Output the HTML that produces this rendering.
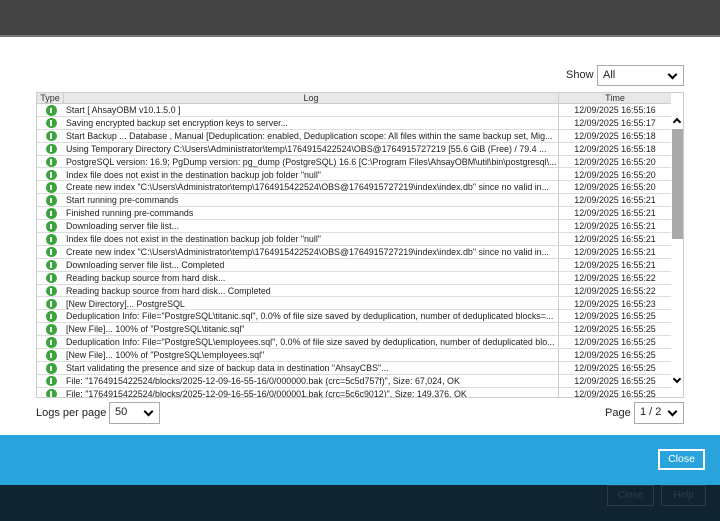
<!DOCTYPE html>
<html><head><style>
*{margin:0;padding:0;box-sizing:border-box}
body{width:720px;height:521px;position:relative;background:#fff;font-family:"Liberation Sans",sans-serif;overflow:hidden}
.top{position:absolute;left:0;top:0;width:720px;height:35px;background:#444}
.top2{position:absolute;left:0;top:35px;width:720px;height:2px;background:#777}
.blue{position:absolute;left:0;top:435px;width:720px;height:50px;background:#29a4dc}
.dark{position:absolute;left:0;top:485px;width:720px;height:36px;background:#0f2331}
.lbl{position:absolute;font-size:11px;color:#222}
.sel{position:absolute;border:1px solid #aaa;background:#fff;font-size:11px;color:#222;padding:3px 5px}
.chev{position:absolute;right:7px;top:5px;width:7px;height:7px;border-right:2.5px solid #000;border-bottom:2.5px solid #000;transform:rotate(45deg)}
.tbl{position:absolute;left:36px;top:92px;width:648px;height:306px;border:1px solid #ccc;overflow:hidden}
.hdr{position:absolute;left:0;top:0;width:634px;height:11px;background:#e8e8e8;border-bottom:1px solid #ccc;font-size:9px;color:#333}
.hdr span{position:absolute;top:0;text-align:center}
.row{position:absolute;left:0;width:634px;height:12.9px;border-bottom:1px solid #ddd;font-size:8.9px;color:#222;line-height:12px;white-space:nowrap}
.ic{position:absolute;left:9px;top:1px;width:10.5px;height:10.5px;border-radius:50%;background:#3aa53a}
.ic:after{content:"";position:absolute;left:4.2px;top:2.5px;width:2px;height:5.5px;background:#fff}
.lg{position:absolute;left:29px;width:490px;overflow:hidden}
.tm{position:absolute;left:521px;width:113px;text-align:center;border-left:1px solid #ccc}
.sb{position:absolute;left:634px;top:0;width:14px;height:306px;background:#fff}
.thumb{position:absolute;left:635px;top:36px;width:12px;height:110px;background:#aaa}
.btn{position:absolute;font-size:10px;text-align:center}
</style></head><body>
<div class="top"></div><div class="top2"></div>
<div class="lbl" style="left:566px;top:69px">Show</div>
<div class="sel" style="left:597px;top:65px;width:87px;height:21px">All<div class="chev"></div></div>
<div class="tbl">
<div class="hdr"><span style="left:0;width:26px">Type</span><span style="left:26px;width:495px;border-left:1px solid #ccc">Log</span><span style="left:521px;width:113px;border-left:1px solid #ccc">Time</span></div>
<div id="rows"></div>
<div class="sb"></div>
<div class="thumb"></div>
<div style="position:absolute;left:637px;top:26px;width:6px;height:6px;border-left:2.5px solid #000;border-top:2.5px solid #000;transform:rotate(45deg)"></div>
<div style="position:absolute;left:637px;top:283px;width:6px;height:6px;border-right:2.5px solid #000;border-bottom:2.5px solid #000;transform:rotate(45deg)"></div>
</div>
<div class="lbl" style="left:36px;top:407px">Logs per page</div>
<div class="sel" style="left:109px;top:402px;width:51px;height:22px">50<div class="chev"></div></div>
<div class="lbl" style="left:605px;top:407px">Page</div>
<div class="sel" style="left:634px;top:402px;width:50px;height:22px">1 / 2<div class="chev"></div></div>
<div class="blue"></div>
<div class="btn" style="left:658px;top:449px;width:47px;height:21px;border:2px solid #fff;color:#fff;line-height:17px;font-size:10.5px">Close</div>
<div class="dark"></div>
<div class="btn" style="left:607px;top:485px;width:47px;height:21px;border:1px solid #2c3b46;color:#2e3e49;line-height:19px">Close</div>
<div class="btn" style="left:661px;top:485px;width:45px;height:21px;border:1px solid #2c3b46;color:#2e3e49;line-height:19px">Help</div>
<script>
var d=[["Start [ AhsayOBM v10.1.5.0 ]","16"],["Saving encrypted backup set encryption keys to server...","17"],["Start Backup ... Database , Manual [Deduplication: enabled, Deduplication scope: All files within the same backup set, Mig...","18"],["Using Temporary Directory C:\\Users\\Administrator\\temp\\1764915422524\\OBS@1764915727219 [55.6 GiB (Free) / 79.4 ...","18"],["PostgreSQL version: 16.9; PgDump version: pg_dump (PostgreSQL) 16.6 [C:\\Program Files\\AhsayOBM\\util\\bin\\postgresql\\...","20"],["Index file does not exist in the destination backup job folder \"null\"","20"],["Create new index \"C:\\Users\\Administrator\\temp\\1764915422524\\OBS@1764915727219\\index\\index.db\" since no valid in...","20"],["Start running pre-commands","21"],["Finished running pre-commands","21"],["Downloading server file list...","21"],["Index file does not exist in the destination backup job folder \"null\"","21"],["Create new index \"C:\\Users\\Administrator\\temp\\1764915422524\\OBS@1764915727219\\index\\index.db\" since no valid in...","21"],["Downloading server file list... Completed","21"],["Reading backup source from hard disk...","22"],["Reading backup source from hard disk... Completed","22"],["[New Directory]... PostgreSQL","23"],["Deduplication Info: File=\"PostgreSQL\\titanic.sql\", 0.0% of file size saved by deduplication, number of deduplicated blocks=...","25"],["[New File]... 100% of \"PostgreSQL\\titanic.sql\"","25"],["Deduplication Info: File=\"PostgreSQL\\employees.sql\", 0.0% of file size saved by deduplication, number of deduplicated blo...","25"],["[New File]... 100% of \"PostgreSQL\\employees.sql\"","25"],["Start validating the presence and size of backup data in destination \"AhsayCBS\"...","25"],["File: \"1764915422524/blocks/2025-12-09-16-55-16/0/000000.bak (crc=5c5d757f)\", Size: 67,024, OK","25"],["File: \"1764915422524/blocks/2025-12-09-16-55-16/0/000001.bak (crc=5c6c9012)\", Size: 149,376, OK","25"]];
var h="";for(var i=0;i<d.length;i++){var t=11+i*12.9;h+='<div class="row" style="top:'+t+'px"><div class="ic"></div><div class="lg">'+d[i][0].replace(/</g,"&lt;")+'</div><div class="tm">12/09/2025 16:55:'+d[i][1]+'</div></div>';}
document.getElementById("rows").innerHTML=h;
</script>
</body></html>
